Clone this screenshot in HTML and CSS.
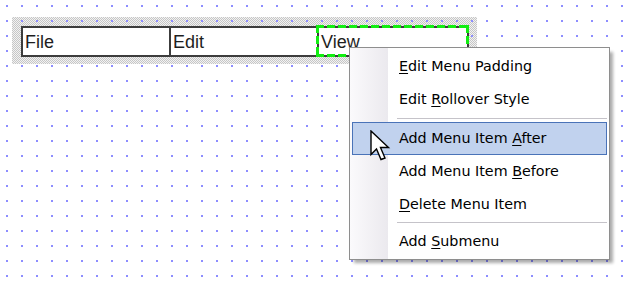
FILE: index.html
```html
<!DOCTYPE html>
<html>
<head>
<meta charset="utf-8">
<link rel="stylesheet" href="styles.css">
</head>
<body>
<div class="canvas">
  <div class="selection">
    <div class="menubar">
      <div class="cell">File</div>
      <div class="cell">Edit</div>
      <div class="cell active">View</div>
    </div>
  </div>

  <div class="context">
    <div class="item"><u>E</u>dit Menu Padding</div>
    <div class="item">Edit <u>R</u>ollover Style</div>
    <div class="sep sep1"></div>
    <div class="item hover">Add Menu Item <u>A</u>fter</div>
    <div class="item">Add Menu Item <u>B</u>efore</div>
    <div class="item"><u>D</u>elete Menu Item</div>
    <div class="sep sep2"></div>
    <div class="item last">Add <u>S</u>ubmenu</div>
  </div>

  <svg class="cursor" width="21" height="32" viewBox="0 0 21 32">
    <path d="M1 1 L1 24.5 L6.5 19 L11 29.5 L15 28 L10.5 17.5 L18.5 17.5 Z" fill="#fff" stroke="#000" stroke-width="1.4" stroke-linejoin="miter"/>
  </svg>
</div>
</body>
</html>
```

FILE: styles.css
```css
html, body {
  margin: 0;
  padding: 0;
  background: #fff;
}

.canvas {
  position: relative;
  width: 631px;
  height: 287px;
  overflow: hidden;
  box-sizing: border-box;
  padding: 17px 0 0 12px;
  background-color: #fff;
  background-image: conic-gradient(from 270deg at 2px 2px, #8d8dff 25%, transparent 0);
  background-size: 15px 15px;
  background-position: 6px 5px;
}

.selection {
  width: fit-content;
  padding: 9px 8px 7px 9px;
  background-image:
    conic-gradient(from 270deg at 2px 2px, #8d8dff 25%, transparent 0),
    repeating-conic-gradient(#c6c6c6 0 25%, #f2f2f2 0 50%);
  background-size: 15px 15px, 2px 2px;
  background-position: 9px 3px, 0 0;
}

.menubar {
  display: flex;
  border: 2px solid #3c3c3c;
  background: #fff;
  font-family: "Liberation Sans", Arial, sans-serif;
  font-size: 18px;
  color: #1e1e1e;
}

.cell {
  position: relative;
  width: 148px;
  height: 27px;
  line-height: 28px;
  padding-left: 2px;
  box-sizing: border-box;
  border-right: 2px solid #3c3c3c;
}

.cell:last-child {
  border-right: 0;
}

.cell.active::after {
  content: "";
  position: absolute;
  left: -3px;
  top: -3px;
  right: -2px;
  bottom: -2px;
  background:
    repeating-linear-gradient(90deg, #12ee12 0 8px, transparent 8px 11px) top left / 100% 3px no-repeat,
    repeating-linear-gradient(90deg, #12ee12 0 8px, transparent 8px 11px) bottom left / 100% 3px no-repeat,
    repeating-linear-gradient(180deg, #12ee12 0 8px, transparent 8px 11px) top left / 3px 100% no-repeat,
    repeating-linear-gradient(180deg, #12ee12 0 8px, transparent 8px 11px) top right / 3px 100% no-repeat;
}

.context {
  position: absolute;
  left: 349px;
  top: 47px;
  width: 261px;
  box-sizing: border-box;
  padding: 2px;
  border: 1px solid #8e8e8e;
  background:
    linear-gradient(90deg, #fbfafc 0, #ebe9ee 38px, #fff 38px) no-repeat;
  box-shadow: 4px 4px 3px -1px rgba(0, 0, 0, 0.33);
  font-family: "DejaVu Sans", Verdana, sans-serif;
  font-size: 14.3px;
  color: #000;
}

.item {
  height: 33px;
  line-height: 31px;
  box-sizing: border-box;
  border: 1px solid transparent;
  padding-left: 46px;
  white-space: nowrap;
}

.item.last {
  height: 32px;
}

.item u {
  text-decoration-thickness: 1px;
  text-underline-offset: 2px;
}

.item.hover {
  background: #c1d2ee;
  border-color: #4a73b8;
}

.sep {
  position: relative;
  margin-left: 45px;
}

.sep1 {
  height: 6px;
}

.sep2 {
  height: 4px;
}

.sep::after {
  content: "";
  position: absolute;
  left: 0;
  right: 0;
  height: 1px;
  background: #c5c3c9;
}

.sep1::after {
  top: 2px;
}

.sep2::after {
  top: 1px;
}

.cursor {
  position: absolute;
  left: 370px;
  top: 130px;
}
```
